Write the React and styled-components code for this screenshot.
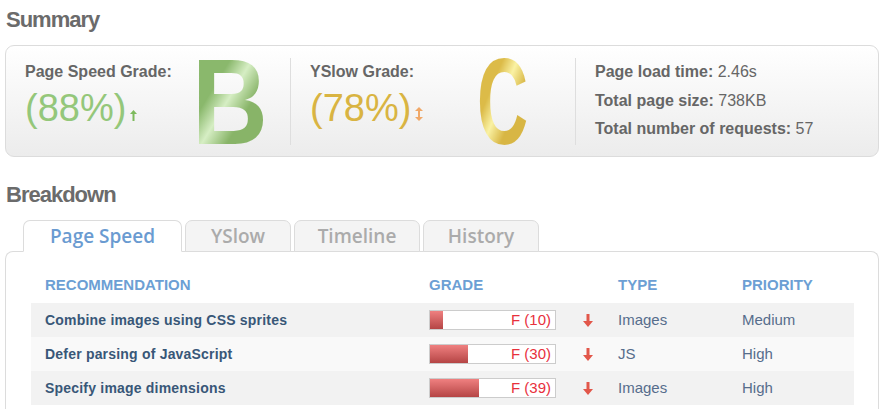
import React from "react";
import styled, { createGlobalStyle } from "styled-components";

const GlobalStyle = createGlobalStyle`
  body {
    margin: 0;
    background: #fff;
    font-family: "Liberation Sans", Arial, sans-serif;
  }
`;

const rows = [
  { name: "Combine images using CSS sprites", score: 10, type: "Images", priority: "Medium" },
  { name: "Defer parsing of JavaScript", score: 30, type: "JS", priority: "High" },
  { name: "Specify image dimensions", score: 39, type: "Images", priority: "High" },
];

const UpArrow = () => (
  <svg width="7" height="11" viewBox="0 0 7 11">
    <path d="M3.5 0 L7 4 L4.5 4 L4.5 11 L2.5 11 L2.5 4 L0 4 Z" fill="#7dba5c" />
  </svg>
);

const BothArrow = () => (
  <svg width="8" height="14" viewBox="0 0 8 14">
    <path d="M4 0 L8 4 L5 4 L5 10 L8 10 L4 14 L0 10 L3 10 L3 4 L0 4 Z" fill="#f0a868" />
  </svg>
);

const DownArrow = () => (
  <svg width="10" height="13" viewBox="0 0 10 13">
    <path d="M3.5 0 L6.5 0 L6.5 7 L10 7 L5 13 L0 7 L3.5 7 Z" fill="#e2574a" />
  </svg>
);

const App = () => {
  return (
    <>
      <GlobalStyle />
      <Page>
        <Heading>Summary</Heading>
        <SummaryBox>
          <Section>
            <GradeBlock>
              <div>
                <Label>Page Speed Grade:</Label>
                <Percent color="#94c77a">
                  (88%)<Trend><UpArrow /></Trend>
                </Percent>
              </div>
              <Letter scale={0.86} from="#8ab86c" mid="#d6eec4" to="#88b468">
                B
              </Letter>
            </GradeBlock>
          </Section>
          <Section divided>
            <GradeBlock>
              <div>
                <Label>YSlow Grade:</Label>
                <Percent color="#d9b442">
                  (78%)<Trend><BothArrow /></Trend>
                </Percent>
              </div>
              <Letter scale={0.58} from="#dcbb48" mid="#faf2a4" to="#d8b644">
                C
              </Letter>
            </GradeBlock>
          </Section>
          <Section divided>
            <Stats>
              <div><b>Page load time:</b> 2.46s</div>
              <div><b>Total page size:</b> 738KB</div>
              <div><b>Total number of requests:</b> 57</div>
            </Stats>
          </Section>
        </SummaryBox>

        <Heading spaced>Breakdown</Heading>
        <Tabs>
          <Tab active w={159}>Page Speed</Tab>
          <Tab w={106}>YSlow</Tab>
          <Tab w={126}>Timeline</Tab>
          <Tab w={116}>History</Tab>
        </Tabs>
        <Panel>
          <HeaderRow>
            <span>Recommendation</span>
            <span>Grade</span>
            <span />
            <span>Type</span>
            <span>Priority</span>
          </HeaderRow>
          {rows.map((r, i) => (
            <Row key={r.name} odd={i % 2 === 0}>
              <Name>{r.name}</Name>
              <Bar>
                <Fill style={{ width: `${r.score}%` }} />
                <Score>F ({r.score})</Score>
              </Bar>
              <ArrowCell><DownArrow /></ArrowCell>
              <Value>{r.type}</Value>
              <Value>{r.priority}</Value>
            </Row>
          ))}
        </Panel>
      </Page>
    </>
  );
};

const Page = styled.div`
  width: 874px;
  padding: 0 15px 0 5px;
`;

const Heading = styled.h2`
  margin: ${({ spaced }) => (spaced ? "18px 0 0" : "0")};
  padding: 7px 0 0 1px;
  font-size: 22px;
  line-height: 26px;
  font-weight: bold;
  letter-spacing: -1px;
  color: #6b6b6b;
`;

const SummaryBox = styled.div`
  margin-top: 12px;
  display: grid;
  grid-template-columns: 284px 285px 1fr;
  padding: 12px 0 11px;
  border: 1px solid #dcdcdc;
  border-radius: 9px;
  background: linear-gradient(#ffffff, #ececec);
`;

const Section = styled.div`
  height: 87px;
  padding-left: 19px;
  border-left: ${({ divided }) => (divided ? "1px solid #dedede" : "none")};
`;

const GradeBlock = styled.div`
  display: grid;
  grid-template-columns: 175px 1fr;
  height: 87px;
`;

const Label = styled.div`
  padding-top: 5px;
  font-size: 16px;
  line-height: 18px;
  font-weight: bold;
  color: #666;
`;

const Percent = styled.div`
  margin-top: 6px;
  font-size: 38px;
  line-height: 42px;
  color: ${({ color }) => color};
  display: flex;
  align-items: baseline;
`;

const Trend = styled.span`
  margin-left: 4px;
  display: inline-flex;
`;

const Letter = styled.div`
  display: inline-block;
  justify-self: start;
  align-self: start;
  margin: -24px 0 0 -8px;
  font-size: 122px;
  line-height: 136px;
  font-weight: bold;
  transform: scaleX(${({ scale }) => scale});
  transform-origin: left;
  background: linear-gradient(
    125deg,
    ${({ from }) => from} 0%,
    ${({ from }) => from} 34%,
    ${({ mid }) => mid} 48%,
    ${({ to }) => to} 64%,
    ${({ to }) => to} 100%
  );
  -webkit-background-clip: text;
  background-clip: text;
  color: transparent;
`;

const Stats = styled.div`
  font-size: 16px;
  line-height: 28.5px;
  color: #666;
`;

const Tabs = styled.div`
  margin-top: 12px;
  padding-left: 18px;
  display: flex;
  gap: 3px;
  position: relative;
  z-index: 1;
  margin-bottom: -1px;
`;

const Tab = styled.div`
  width: ${({ w }) => w}px;
  box-sizing: border-box;
  height: 32px;
  padding-top: 1px;
  border: 1px solid #dcdcdc;
  border-bottom: ${({ active }) => (active ? "1px solid #fff" : "1px solid #dcdcdc")};
  border-radius: 7px 7px 0 0;
  background: ${({ active }) => (active ? "#fff" : "#f4f4f4")};
  font-family: "Open Sans", sans-serif;
  font-size: 19px;
  font-weight: 600;
  line-height: 28px;
  text-align: center;
  color: ${({ active }) => (active ? "#6a9bd1" : "#ababab")};
`;

const Panel = styled.div`
  border: 1px solid #dcdcdc;
  border-bottom: none;
  border-radius: 8px 8px 0 0;
  padding: 0 24px 40px 25px;
  background: #fff;
`;

const Grid = styled.div`
  display: grid;
  grid-template-columns: 384px 154px 35px 124px 1fr;
  padding-left: 14px;
`;

const HeaderRow = styled(Grid)`
  padding-top: 24px;
  padding-bottom: 9px;
  font-size: 15px;
  line-height: 18px;
  font-weight: bold;
  text-transform: uppercase;
  color: #6c9fd4;
`;

const Row = styled(Grid)`
  height: 34px;
  line-height: 34px;
  align-items: center;
  background: ${({ odd }) => (odd ? "#f2f2f2" : "#f9f9f9")};
`;

const Name = styled.span`
  font-size: 14px;
  font-weight: bold;
  letter-spacing: 0.2px;
  color: #385778;
`;

const Bar = styled.div`
  position: relative;
  width: 127px;
  height: 20px;
  box-sizing: border-box;
  border: 1px solid #cccccc;
  background: #fff;
`;

const Fill = styled.div`
  height: 100%;
  background: linear-gradient(#ef8080, #b54545);
`;

const Score = styled.span`
  position: absolute;
  right: 4px;
  top: 0;
  font-size: 15px;
  line-height: 18px;
  color: #e8303c;
`;

const ArrowCell = styled.span`
  display: flex;
  align-items: center;
  height: 34px;
`;

const Value = styled.span`
  font-size: 15px;
  color: #566d8c;
`;

export default App;
